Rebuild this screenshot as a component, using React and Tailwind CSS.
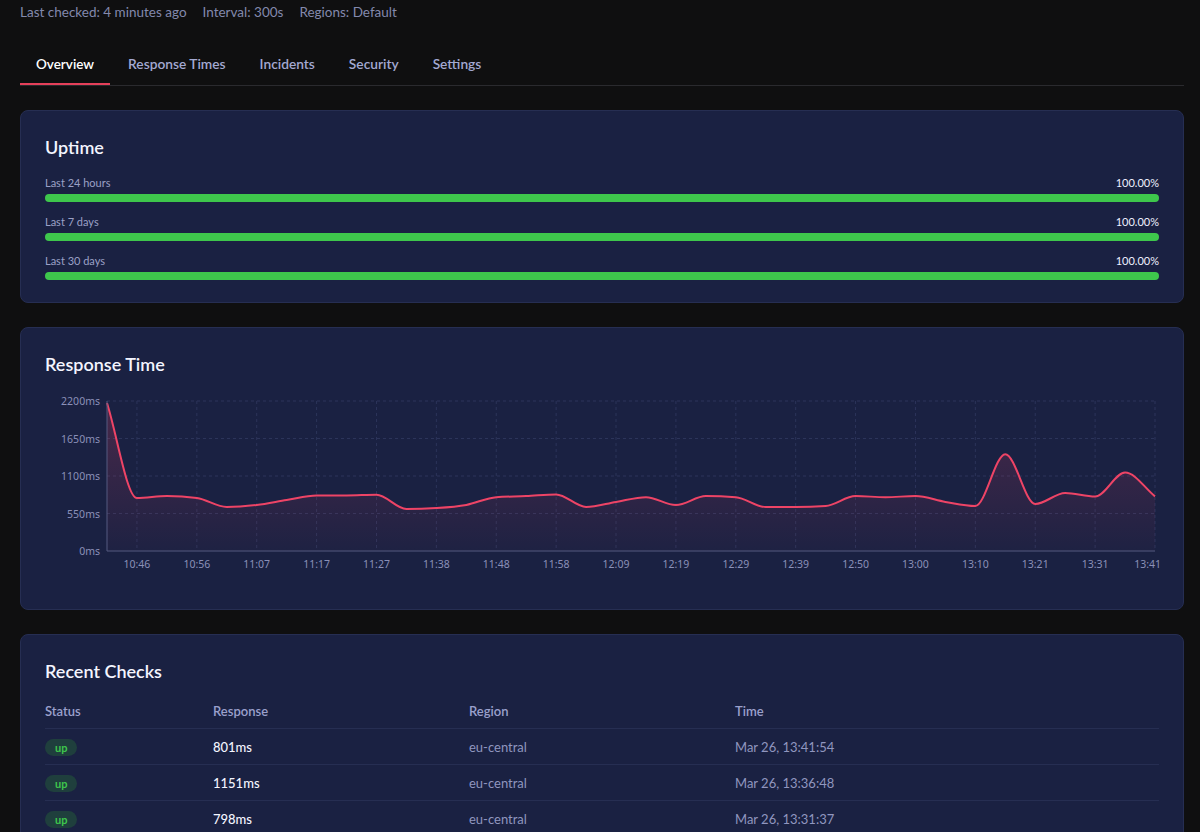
import { useMemo } from 'react'

const tabs = ['Overview', 'Response Times', 'Incidents', 'Security', 'Settings']

const uptime = [
  { label: 'Last 24 hours', value: '100.00%' },
  { label: 'Last 7 days', value: '100.00%' },
  { label: 'Last 30 days', value: '100.00%' },
]

const series = [
  2170, 777, 805, 777, 645, 675, 748, 815, 815, 825, 616, 630, 675, 790, 805, 830, 645, 720,
  790, 675, 805, 790, 645, 645, 660, 805, 790, 805, 720, 660, 1420, 690, 850, 798, 1151, 801,
]

const xLabels = [
  '10:46', '10:56', '11:07', '11:17', '11:27', '11:38', '11:48', '11:58', '12:09',
  '12:19', '12:29', '12:39', '12:50', '13:00', '13:10', '13:21', '13:31', '13:41',
]

const yTicks = [2200, 1650, 1100, 550, 0]

const checks = [
  { response: '801ms', region: 'eu-central', time: 'Mar 26, 13:41:54' },
  { response: '1151ms', region: 'eu-central', time: 'Mar 26, 13:36:48' },
  { response: '798ms', region: 'eu-central', time: 'Mar 26, 13:31:37' },
]

// chart geometry (svg coords)
const W = 1116
const H = 202
const left = 62
const right = 1110
const top = 16
const bottom = 166
const maxVal = 2200

const px = (i) => left + (i * (right - left)) / (series.length - 1)
const py = (v) => bottom - (v / maxVal) * (bottom - top)

// monotone cubic (same idea as d3 curveMonotoneX)
function monotonePath(pts) {
  const n = pts.length
  const slopes = []
  for (let i = 0; i < n - 1; i++) {
    slopes.push((pts[i + 1][1] - pts[i][1]) / (pts[i + 1][0] - pts[i][0]))
  }
  const t = new Array(n)
  t[0] = slopes[0]
  t[n - 1] = slopes[n - 2]
  for (let i = 1; i < n - 1; i++) {
    const a = slopes[i - 1]
    const b = slopes[i]
    if (a * b <= 0) t[i] = 0
    else {
      const h0 = pts[i][0] - pts[i - 1][0]
      const h1 = pts[i + 1][0] - pts[i][0]
      const p = (a * h1 + b * h0) / (h0 + h1)
      t[i] = (Math.sign(a) + Math.sign(b)) * Math.min(Math.abs(a), Math.abs(b), 0.5 * Math.abs(p))
    }
  }
  let d = `M${pts[0][0]},${pts[0][1]}`
  for (let i = 0; i < n - 1; i++) {
    const [x0, y0] = pts[i]
    const [x1, y1] = pts[i + 1]
    const dx = (x1 - x0) / 3
    d += ` C${x0 + dx},${y0 + dx * t[i]} ${x1 - dx},${y1 - dx * t[i + 1]} ${x1},${y1}`
  }
  return d
}

function ResponseChart() {
  const line = useMemo(() => monotonePath(series.map((v, i) => [px(i), py(v)])), [])
  const area = `${line} L${right},${bottom} L${left},${bottom} Z`

  return (
    <svg width={W} height={H} className="block" style={{ fontFamily: '"Noto Sans", sans-serif' }}>
      <defs>
        <linearGradient id="rtFill" x1="0" y1="0" x2="0" y2="1">
          <stop offset="0%" stopColor="#ee4466" stopOpacity="0.22" />
          <stop offset="100%" stopColor="#ee4466" stopOpacity="0.02" />
        </linearGradient>
      </defs>

      {yTicks.slice(0, 4).map((v) => (
        <line key={v} x1={left} x2={right} y1={py(v)} y2={py(v)} stroke="#2c345a" strokeDasharray="3 3" />
      ))}
      {xLabels.map((l, k) => (
        <line key={l} x1={px(k * 2 + 1)} x2={px(k * 2 + 1)} y1={top} y2={bottom} stroke="#2c345a" strokeDasharray="3 3" />
      ))}

      <path d={area} fill="url(#rtFill)" />
      <path d={line} fill="none" stroke="#ee4466" strokeWidth="2" />

      <line x1={left} x2={left} y1={top} y2={bottom} stroke="#545b80" />
      <line x1={left} x2={right} y1={bottom} y2={bottom} stroke="#545b80" />

      {yTicks.map((v) => (
        <text key={v} x={left - 7} y={py(v) + 4} textAnchor="end" fontSize="10.5" fill="#8a90b8">
          {v}ms
        </text>
      ))}
      {xLabels.map((l, k) => {
        const last = k === xLabels.length - 1
        return (
          <text
            key={l}
            x={last ? right + 6 : px(k * 2 + 1)}
            y={bottom + 17}
            textAnchor={last ? 'end' : 'middle'}
            fontSize="10.5"
            fill="#8a90b8"
          >
            {l}
          </text>
        )
      })}
    </svg>
  )
}

function Card({ title, children, titleClass = 'mb-3.5' }) {
  return (
    <section className="rounded-lg border border-[#262e52] bg-[#1a2142] px-6 pt-[22px] pb-[22px]">
      <h2 className={`text-lg font-semibold leading-7 text-[#f4f5ff] ${titleClass}`}>{title}</h2>
      {children}
    </section>
  )
}

export default function App() {
  return (
    <div
      className="min-h-screen bg-[#0f0f10] pl-5 pr-4 pb-10"
      style={{ fontFamily: 'Lato, "Noto Sans", sans-serif' }}
    >
      <div className="flex gap-4 pt-0.5 text-[13.5px] leading-5 text-[#8389ad]">
        <span>Last checked: 4 minutes ago</span>
        <span>Interval: 300s</span>
        <span>Regions: Default</span>
      </div>

      <nav className="mt-[22px] mb-6 flex gap-0.5 border-b border-[#2a2a2e]">
        {tabs.map((tab, i) => (
          <button
            key={tab}
            className={
              i === 0
                ? 'border-b-2 border-[#e5405a] px-4 pt-2.5 pb-[9px] text-[13.5px] font-semibold leading-5 text-white'
                : 'border-b-2 border-transparent px-4 pt-2.5 pb-[9px] text-[13.75px] font-semibold leading-5 text-[#a3a9d2]'
            }
          >
            {tab}
          </button>
        ))}
      </nav>

      <div className="flex flex-col gap-6">
        <Card title="Uptime">
          <div className="space-y-3">
            {uptime.map((row) => (
              <div key={row.label}>
                <div className="mb-[3px] flex justify-between text-[11px] leading-4">
                  <span className="text-[#9aa0c6]">{row.label}</span>
                  <span className="text-[#eef0ff]">{row.value}</span>
                </div>
                <div className="h-2 rounded-full bg-[#3ec74c]" />
              </div>
            ))}
          </div>
        </Card>

        <Card title="Response Time" titleClass="mb-[7px]">
          <ResponseChart />
        </Card>

        <Card title="Recent Checks" titleClass="mb-2">
          <div className="text-[13px] leading-5">
            <div className="grid h-9 grid-cols-[168px_256px_266px_1fr] items-center border-b border-[#262e52] font-semibold text-[#9aa0cc]">
              <span>Status</span>
              <span>Response</span>
              <span>Region</span>
              <span>Time</span>
            </div>
            {checks.map((c) => (
              <div
                key={c.time}
                className="grid h-9 grid-cols-[168px_256px_266px_1fr] items-center border-b border-[#262e52]"
              >
                <span>
                  <span className="inline-block rounded-full bg-[#1f3f3d] px-2.5 text-[11px] font-bold leading-[17px] text-[#3ec74c]">
                    up
                  </span>
                </span>
                <span className="font-medium text-[#f4f5ff]">{c.response}</span>
                <span className="text-[#9096bf]">{c.region}</span>
                <span className="text-[#9096bf]">{c.time}</span>
              </div>
            ))}
          </div>
        </Card>
      </div>
    </div>
  )
}
